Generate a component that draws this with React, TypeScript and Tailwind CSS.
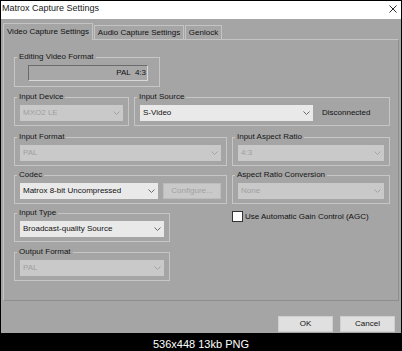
import type { ReactNode } from "react";

/** Small chevron at the right end of a combo box */
const Chevron = ({ disabled }: { disabled?: boolean }) => (
    <svg width="7" height="4" viewBox="0 0 7 4" className="shrink-0">
        <path d="M0.5 0.5 L3.5 3.5 L6.5 0.5" fill="none" stroke={disabled ? "#a3a3a3" : "#6a6a6a"} strokeWidth="1" />
    </svg>
);

interface IComboProps {
    value: string,
    disabled?: boolean,
    className?: string
}

/** Windows style drop-down list */
const Combo = ({ value, disabled, className = "" }: IComboProps) => (
    <div className={`flex h-[16px] items-center justify-between pl-[3px] pr-[3px] ${disabled ? "bg-[#c9c9c9] text-[#9f9f9f]" : "bg-[#e9e9e9] text-[#111111]"} ${className}`}>
        <span className="whitespace-nowrap leading-none">{value}</span>
        <Chevron disabled={disabled} />
    </div>
);

interface IGroupProps {
    label: string,
    className?: string,
    children?: ReactNode
}

/** Group box with the caption sitting on the top border */
const Group = ({ label, className = "", children }: IGroupProps) => (
    <fieldset className={`min-w-0 border border-[#c6c6c6] px-[2px] pt-[3px] ${className}`}>
        <legend className="px-[2px] text-[8px] leading-[10px] text-[#151515]">{label}</legend>
        <div className="mx-[3px]">{children}</div>
    </fieldset>
);

const tabs = [
    { label: "Video Capture Settings", width: "w-[90px]", active: true },
    { label: "Audio Capture Settings", width: "w-[90px]", active: false },
    { label: "Genlock", width: "w-[37px]", active: false },
];

const App = () => {
    return (
        <div className="flex h-[351px] w-[402px] flex-col bg-black font-['Liberation_Sans',Arial,sans-serif] text-[8px] text-[#111111]">
            {/* dialog window */}
            <div className="flex h-[335px] flex-col border border-black">
                <div className="flex h-[18px] items-start justify-between bg-white">
                    <span className="pl-[1px] pt-[2px] text-[9px] leading-[10px] text-[#1a1a1a]">Matrox Capture Settings</span>
                    <svg width="8" height="8" viewBox="0 0 8 8" className="mr-[4px] mt-[4px]">
                        <path d="M0.5 0.5 L7.5 7.5 M7.5 0.5 L0.5 7.5" stroke="#2a2a2a" strokeWidth="1" />
                    </svg>
                </div>

                <div className="flex flex-1 flex-col bg-[#a5a5a5] pt-[4px]">
                    {/* tabs */}
                    <div className="flex h-[16px] items-end pl-[2px]">
                        {tabs.map((tab) => (
                            <div
                                key={tab.label}
                                className={`flex items-center justify-center whitespace-nowrap border border-b-0 border-[#c4c4c4] bg-[#a5a5a5] leading-none ${tab.width} ${tab.active ? "relative z-10 -mb-px h-[17px]" : "ml-[1px] h-[14px] pt-[1px]"}`}
                            >
                                {tab.label}
                            </div>
                        ))}
                    </div>

                    {/* tab page */}
                    <div className="mx-[2px] flex h-[262px] flex-col border border-[#c4c4c4] border-b-[#8e8e8e] border-r-[#8e8e8e] pl-[10px] pt-[12px]">
                        <Group label="Editing Video Format" className="h-[35px] w-[146px]">
                            <div className="ml-[8px] flex h-[16px] w-[120px] items-center justify-end whitespace-pre border border-b-[#d8d8d8] border-l-[#6b6b6b] border-r-[#d8d8d8] border-t-[#6b6b6b] bg-[#a8a8a8] pr-[1px] leading-none">
                                PAL  4:3
                            </div>
                        </Group>

                        <div className="mt-[5px] flex gap-[5px]">
                            <Group label="Input Device" className="h-[34px] w-[115px]">
                                <Combo value="MXO2 LE" disabled />
                            </Group>
                            <Group label="Input Source" className="h-[34px] w-[256px]">
                                <div className="flex items-center gap-[9px]">
                                    <Combo value="S-Video" className="w-[173px]" />
                                    <span className="leading-none">Disconnected</span>
                                </div>
                            </Group>
                        </div>

                        <div className="mt-[6px] flex gap-[5px]">
                            <Group label="Input Format" className="h-[34px] w-[213px]">
                                <Combo value="PAL" disabled />
                            </Group>
                            <Group label="Input Aspect Ratio" className="h-[34px] w-[158px]">
                                <Combo value="4:3" disabled />
                            </Group>
                        </div>

                        <div className="mt-[4px] flex gap-[5px]">
                            <Group label="Codec" className="h-[34px] w-[213px]">
                                <div className="flex gap-[5px]">
                                    <Combo value="Matrox 8-bit Uncompressed" className="flex-1" />
                                    <div className="flex h-[16px] w-[58px] items-center justify-center border border-[#bdbdbd] bg-[#c9c9c9] leading-none text-[#a1a1a1]">
                                        Configure...
                                    </div>
                                </div>
                            </Group>
                            <Group label="Aspect Ratio Conversion" className="h-[34px] w-[158px]">
                                <Combo value="None" disabled />
                            </Group>
                        </div>

                        <div className="mt-[4px] flex">
                            <Group label="Input Type" className="h-[34px] w-[156px]">
                                <Combo value="Broadcast-quality Source" />
                            </Group>
                            <label className="ml-[62px] mt-[3px] flex h-[11px] items-center gap-[2px]">
                                <span className="h-[11px] w-[11px] border border-[#333333] bg-white" />
                                <span className="whitespace-nowrap leading-none">Use Automatic Gain Control (AGC)</span>
                            </label>
                        </div>

                        <div className="mt-[5px] flex">
                            <Group label="Output Format" className="h-[34px] w-[156px]">
                                <Combo value="PAL" disabled />
                            </Group>
                        </div>
                    </div>

                    {/* dialog buttons */}
                    <div className="mt-[15px] flex justify-end gap-[7px] pr-[6px]">
                        <div className="flex h-[16px] w-[55px] items-center justify-center border border-[#cfcfcf] bg-[#e0e0e0] leading-none">OK</div>
                        <div className="flex h-[16px] w-[55px] items-center justify-center border border-[#cfcfcf] bg-[#e0e0e0] leading-none">Cancel</div>
                    </div>
                </div>
            </div>

            <div className="flex-1 pt-[4px] text-center text-[11px] leading-[13px] text-white">536x448 13kb PNG</div>
        </div>
    );
};

export default App;
